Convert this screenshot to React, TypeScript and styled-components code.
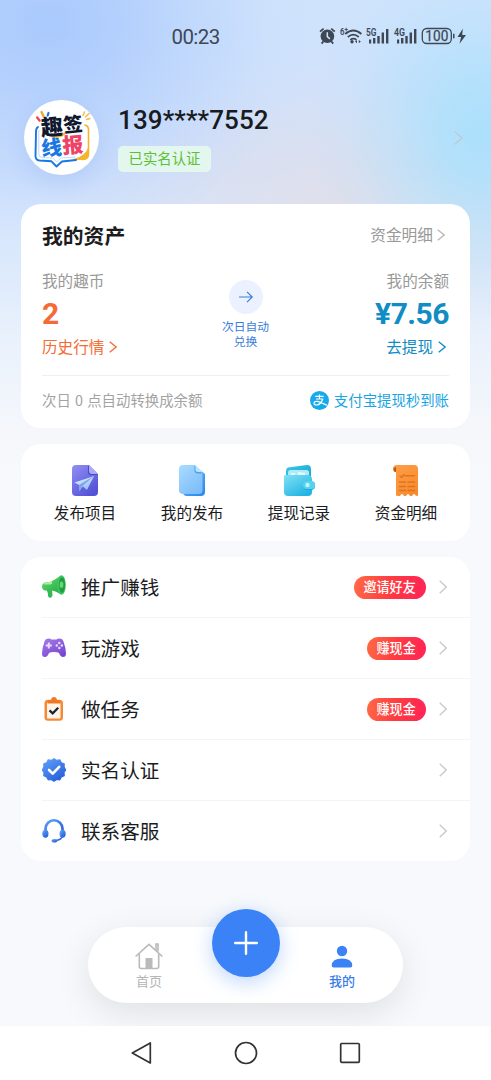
import React from "react";
import styled, { createGlobalStyle } from "styled-components";

const cjk = `"Noto Sans CJK SC", "Noto Sans", sans-serif`;
const num = `Roboto, "Noto Sans", "Noto Sans CJK SC", sans-serif`;

const GlobalStyle = createGlobalStyle`
  *, *::before, *::after { box-sizing: border-box; }
  body { margin: 0; font-family: ${cjk}; color: #1b1c1e; background: #f7f9fc; }
  svg { display: block; flex: none; }
`;

const Screen = styled.div`
  display: flex;
  flex-direction: column;
  width: 491px;
  height: 1080px;
  overflow: hidden;
  background:
    radial-gradient(ellipse 170px 190px at 482px 132px, rgba(168, 224, 252, 0.92) 0%, rgba(168, 224, 252, 0.72) 25%, rgba(168, 224, 252, 0.38) 52%, rgba(168, 224, 252, 0.12) 78%, rgba(168, 224, 252, 0) 100%),
    radial-gradient(ellipse 260px 220px at 48px 22px, rgba(168, 200, 253, 0.95) 0%, rgba(168, 200, 253, 0.72) 28%, rgba(168, 200, 253, 0.38) 55%, rgba(168, 200, 253, 0.1) 82%, rgba(168, 200, 253, 0) 100%),
    radial-gradient(ellipse 290px 150px at 340px 200px, rgba(224, 223, 234, 0.95) 0%, rgba(224, 223, 234, 0.6) 38%, rgba(224, 223, 234, 0.18) 74%, rgba(224, 223, 234, 0) 100%),
    linear-gradient(180deg, #d0e3fc 0, #cfe1fd 170px, #dbe9fc 260px, #ebf2fc 350px, #f5f7fb 430px, #f7f9fc 480px);
`;

const StatusBar = styled.header`
  display: flex;
  align-items: center;
  justify-content: space-between;
  height: 72px;
  padding: 0 23px 0 171.5px;
`;

const Clock = styled.time`
  font: 400 20.5px/24px ${num};
  letter-spacing: -0.6px;
  color: #3e4754;
  padding-top: 2px;
`;

const Profile = styled.section`
  display: flex;
  align-items: center;
  height: 76px;
  margin: 27.5px 28px 0 24px;
`;

const Avatar = styled.div`
  width: 75px;
  height: 75px;
  border-radius: 50%;
  background: #fff;
  box-shadow: 0 8px 20px rgba(80, 130, 220, 0.14);
`;

const Identity = styled.div`
  display: flex;
  flex-direction: column;
  align-items: flex-start;
  flex: 1;
  gap: 10px;
  margin-left: 19px;
`;

const Phone = styled.h1`
  margin: 0;
  font: 500 26px/32px ${num};
  letter-spacing: 0.1px;
  color: #191b20;
`;

const Verified = styled.span`
  height: 26px;
  padding: 0 10.5px;
  border-radius: 5px;
  background: #e4f7ee;
  color: #5cc034;
  font-size: 14.4px;
  line-height: 24px;
`;

const Card = styled.section<{ $pad?: string; $gap?: string }>`
  margin: ${(p) => p.$gap ?? "16px"} 21px 0;
  padding: ${(p) => p.$pad ?? "0"};
  border-radius: 20px;
  background: #fff;
`;

const Between = styled.div`
  display: flex;
  justify-content: space-between;
`;

const CardTitle = styled.h2`
  margin: 0;
  font-size: 20.8px;
  line-height: 24px;
  font-weight: 700;
`;

const MoreLink = styled.a`
  display: flex;
  align-items: center;
  gap: 4px;
  padding-right: 4px;
  font-size: 15.7px;
  line-height: 24px;
  color: #999;
`;

const Balances = styled(Between)`
  height: 110px;
  padding-top: 23px;
`;

const Balance = styled.div<{ $tone: string; $end?: boolean }>`
  display: flex;
  flex-direction: column;
  align-items: ${(p) => (p.$end ? "flex-end" : "flex-start")};
  width: 120px;
  color: ${(p) => p.$tone};
`;

const Label = styled.span`
  font-size: 15.6px;
  line-height: 20px;
  color: #999;
`;

const Amount = styled.strong`
  font: 700 30px/36px ${num};
  letter-spacing: -0.5px;
  margin: 6px 0 4px;
`;

const ActionLink = styled.a<{ $inset?: boolean }>`
  display: flex;
  align-items: center;
  gap: 5px;
  padding-right: ${(p) => (p.$inset ? "3px" : "0")};
  font-size: 15.6px;
  line-height: 20px;
  svg { margin-top: 2px; }
`;

const Exchange = styled.div`
  display: flex;
  flex-direction: column;
  align-items: center;
  padding-top: 10px;
  width: 60px;
  font-size: 11.8px;
  line-height: 15px;
  text-align: center;
  color: #3b7ddb;
`;

const ArrowDisc = styled.span`
  display: flex;
  align-items: center;
  justify-content: center;
  width: 34px;
  height: 34px;
  margin-bottom: 4px;
  border-radius: 50%;
  background: #ebf1fe;
`;

const CardFoot = styled(Between)`
  margin-top: 18px;
  padding-top: 14px;
  border-top: 1px solid #efeff1;
  font-size: 14.4px;
  line-height: 20px;
  color: #a3a3a3;
`;

const FootNote = styled.span`
  word-spacing: 1px;
`;

const PayNote = styled.span`
  display: flex;
  align-items: center;
  gap: 5px;
  color: #18a5e4;
`;

const Shortcuts = styled.nav`
  display: grid;
  grid-template-columns: repeat(4, 1fr);
`;

const Shortcut = styled.a`
  display: flex;
  flex-direction: column;
  align-items: center;
  gap: 4px;
  font-size: 15.6px;
  line-height: 22px;
`;

const Row = styled.a`
  display: flex;
  align-items: center;
  height: 61px;
  margin-left: 21px;
  padding-right: 23px;
  font-size: 19.6px;
  & + & { border-top: 1px solid #f3f4f6; }
  &:first-child { height: 60px; }
`;

const RowLabel = styled.span`
  flex: 1;
  margin-left: 15px;
  line-height: 28px;
`;

const Pill = styled.span`
  height: 23px;
  margin-right: 13.5px;
  padding: 0 9.7px;
  border-radius: 12px;
  background: linear-gradient(100deg, #ff6b45 0%, #ff3b41 50%, #ff2357 100%);
  color: #fff;
  font-size: 13.1px;
  font-weight: 500;
  line-height: 22.5px;
`;

const TabBar = styled.nav`
  display: flex;
  justify-content: space-between;
  width: 315px;
  height: 76px;
  margin: 66px auto 0 88px;
  padding: 0 46px;
  border-radius: 38px;
  background: #fff;
  box-shadow: 0 10px 36px rgba(0, 0, 0, 0.1);
`;

const Tab = styled.a<{ $active?: boolean }>`
  display: flex;
  flex-direction: column;
  align-items: center;
  gap: 1px;
  padding-top: 16px;
  width: 30px;
  font-size: 13px;
  line-height: 20px;
  font-weight: ${(p) => (p.$active ? 500 : 400)};
  color: ${(p) => (p.$active ? "#3a7de4" : "#b5b5b5")};
`;

const AddButton = styled.button`
  display: flex;
  align-items: center;
  justify-content: center;
  width: 68px;
  height: 68px;
  margin: -18px 0 0;
  padding: 0;
  border: 0;
  border-radius: 50%;
  background: #3b82f6;
  box-shadow: 0 5px 20px rgba(59, 130, 246, 0.33);
`;

const SystemNav = styled.footer`
  display: flex;
  align-items: center;
  justify-content: space-between;
  height: 54px;
  margin-top: auto;
  padding: 0 130px;
  background: #fff;
  position: relative;
`;

const Chevron = ({ w = 8, h = 14, color = "#c8c9cc" }: { w?: number; h?: number; color?: string }) => (
  <svg width={w} height={h} viewBox={`0 0 ${w} ${h}`} fill="none" stroke={color} strokeWidth="1.3">
    <path d={`M.7 .7 L${w - 0.8} ${h / 2} L.7 ${h - 0.7}`} />
  </svg>
);

const StatusIcons = () => (
  <svg width="150" height="24" viewBox="318 24 150 24" fill="#3e4754">
    <circle cx="327.4" cy="36.3" r="6.8" />
    <path d="M320 31.6l3.6-3M331.200 28.600l3.600 3M323.500 41.200l-1.900 2.400M331.300 41.200l1.900 2.400" stroke="#3e4754" strokeWidth="1.8" />
    <path d="M327.300 32.300v4.300l2.600 2.300" stroke="#cfe2fb" strokeWidth="1.500" fill="none" />
    <text x="340" y="35" fontSize="9" fontWeight="600" fontFamily="Roboto" textLength="4.500" lengthAdjust="spacingAndGlyphs">6</text>
    <path d="M346.200 27.800v3.400M344.600 29.500h3.200" stroke="#3e4754" strokeWidth=".9" />
    <g fill="none" stroke="#3e4754" strokeWidth="1.700">
      <path d="M345.200 34q8.200-7 16.200 0" />
      <path d="M347.800 37q5.600-4.600 11 0" />
      <path d="M350.300 39.800q3.200-2.500 6.200 0" />
    </g>
    <circle cx="352" cy="41.700" r="1.700" />
    <path d="M355 41.600l2-1.700v3.400zM360.800 41.600l-2-1.700v3.400z" />
    <text x="366" y="35.800" fontSize="10" fontWeight="600" fontFamily="Roboto" textLength="10.500" lengthAdjust="spacingAndGlyphs">5G</text>
    <text x="394" y="35.800" fontSize="10" fontWeight="600" fontFamily="Roboto" textLength="11" lengthAdjust="spacingAndGlyphs">4G</text>
    {[0, 28].map((dx) => (
      <g key={dx} transform={`translate(${dx} 0)`}>
        <rect x="369" y="39.500" width="2.200" height="4" />
        <rect x="373" y="38" width="2.400" height="5.500" />
        <rect x="377.300" y="36" width="2.400" height="7.500" />
        <rect x="381.600" y="32.500" width="2.400" height="11" />
        <rect x="386" y="29" width="2.400" height="14.500" />
      </g>
    ))}
    <rect x="422.300" y="28.500" width="29" height="15" rx="4.500" fill="none" stroke="#3e4754" strokeWidth="1.300" />
    <text x="425.300" y="41.100" fontSize="14.500" fontWeight="400" fontFamily="Roboto" stroke="#3e4754" strokeWidth=".25" textLength="23" lengthAdjust="spacingAndGlyphs">100</text>
    <rect x="453" y="33.800" width="1.500" height="4.500" />
    <path d="M462.800 28.700l-5.300 8.300h3.600l-1.600 6.800 6.500-8.800h-3.800z" />
  </svg>
);

const Logo = () => (
  <svg width="75" height="75" viewBox="0 0 75 75" fontFamily="Noto Sans CJK SC" fontWeight="900">
    <g fill="none" strokeLinecap="round" strokeLinejoin="round">
      <path d="M61 25q4 1 3.500 6v23q0 5-6 5.500" stroke="#f5b52b" strokeWidth="1.600" />
      <path d="M64.500 48v8q-1 3.500-6 3.500h-9q12-3 15-11.500z" fill="#f5b52b" stroke="#f5b52b" strokeWidth="1" />
      <path d="M14 27q-2 1-2 5l-.5 24q0 4 4 4.500l12 .8 5 5.200 5.500-5 14-1.500" stroke="#1877e0" strokeWidth="1.900" />
      <path d="M14.800 30v24q0 3 3 3.500l11 .5 4 4 4-4 14-1" stroke="#bfdcfb" strokeWidth="1" />
      <path d="M13.200 17.500l2.300 3" stroke="#ee4266" strokeWidth="2.400" />
      <path d="M17.500 12l2.400 5" stroke="#f3a92c" strokeWidth="2.400" />
      <path d="M24.500 13l-.8 2.500" stroke="#1877e0" strokeWidth="2.200" />
      <path d="M59 15.500l1.500-3.500M61.500 17l3.500-3.500M62.500 19.500l3.500-1" stroke="#f3b94a" strokeWidth="1.400" />
      <path d="M26 35q9 4 15-2" stroke="#f3b52b" strokeWidth="2" />
    </g>
    <g fill="#101830">
      <text transform="translate(17.500 36) rotate(-5)" fontSize="22">趣</text>
      <text transform="translate(40 32.500) rotate(-6)" fontSize="19.500">签</text>
    </g>
    <text transform="translate(18 56) rotate(-5)" fontSize="20.500" fill="#1877e0">线</text>
    <text transform="translate(39 53.500) rotate(-5)" fontSize="21" fill="#ee4266">报</text>
  </svg>
);

const Gradients = () => (
  <svg width="0" height="0">
    <defs>
      {[
        ["gPurple", "#9290f5", "#5351d6"],
        ["gSky", "#a9dcff", "#7ebdf9"],
        ["gSkyBack", "#6cb7f5", "#2d8df0"],
        ["gCyan", "#7fe2f6", "#22b4e2"],
        ["gCyanBack", "#38c7ea", "#139fcd"],
        ["gOrange", "#ff9f49", "#f98a2c"],
        ["gGreen", "#6edb6d", "#27ae4c"],
        ["gViolet", "#a77ce9", "#7847cf"],
        ["gBlue", "#5fa2fa", "#2860db"],
        ["gPlane", "#e4f3ff", "#94bcf8"],
      ].map(([id, a, b]) => (
        <linearGradient key={id} id={id} x1="0" y1="0" x2=".7" y2="1">
          <stop stopColor={a} />
          <stop offset="1" stopColor={b} />
        </linearGradient>
      ))}
    </defs>
  </svg>
);

const PublishIcon = () => (
  <svg width="32" height="33" viewBox="0 0 32 33">
    <path d="M7 1h13l9 9v18q0 4-4 4H7q-4 0-4-4V5q0-4 4-4z" fill="url(#gPurple)" />
    <path d="M19 1.500l10 9.500h-7q-3 0-3-3z" fill="#4d49c6" />
    <path d="M20 1l9 9h-6q-3 0-3-3z" fill="#aaa9fa" />
    <path d="M7 20l17-7-5.500 14-3.500-4.500-3 5.500v-7z" fill="#4744bb" opacity=".5" />
    <path d="M5.500 18.500L25 12l-7 14-4-3.500-3.500 4.500-.5-6z" fill="url(#gPlane)" />
    <path d="M25 12L10 21l.5 6 3-5z" fill="#7ca5ee" />
  </svg>
);

const PostsIcon = () => (
  <svg width="32" height="33" viewBox="0 0 32 33">
    <path d="M11 4h11l7 6v18q0 4-4 4H11q-4 0-4-4V8q0-4 4-4z" fill="url(#gSkyBack)" />
    <path d="M7 1h12l7.500 7.500V26q0 4-4 4H7q-4 0-4-4V5q0-4 4-4z" fill="url(#gSky)" />
    <path d="M18.500 1.500l8 8h-5q-3 0-3-3z" fill="#4ea1ef" />
    <path d="M19.500 1l7 7H22q-2.500 0-2.500-2.500z" fill="#bce4ff" />
  </svg>
);

const WalletIcon = () => (
  <svg width="34" height="33" viewBox="0 0 34 33">
    <path d="M6 3.500L25 1q4 0 4 4v20H4V7q0-3 2-3.500z" fill="url(#gCyanBack)" />
    <rect x="6" y="6" width="21" height="12" rx="2.500" fill="#b0eafa" />
    <path d="M9 9h4v3H9zM16 8l7 1v3h-7z" fill="#e5fbff" />
    <path d="M2 12q0-1.500 3-1h20q5 0 5 4v13q0 4-4 4H6q-4 0-4-4V12z" fill="url(#gCyan)" />
    <rect x="21" y="17.500" width="12" height="8.500" rx="4" fill="#1ba9d9" />
    <rect x="21" y="17" width="12" height="8" rx="3.500" fill="#56d2ef" />
    <circle cx="25.500" cy="21" r="2.200" fill="#c2f3fc" />
  </svg>
);

const BillIcon = () => (
  <svg width="32" height="33" viewBox="0 0 32 33">
    <path d="M6 1h18q4 0 4 4v26.500l-2 .5q-2-4-4 0h-2q-2-4-4 0h-2q-2-4-4 0H8l-2-.5V8q-3-.5-3-3.500T6 1z" fill="url(#gOrange)" />
    <path d="M4 7.500q-1.500-4 2-4.500v5z" fill="#b95716" />
    <path d="M10 12l1.800 1.500L14 10.500M15 11.800h9.500M9.500 18h6M18 18h6.500M9.500 22.500h6M18 22.500h6.500M9.500 26.500h6M18 26.500h6.500" fill="none" stroke="#dd7422" strokeWidth="1.400" strokeLinecap="round" />
  </svg>
);

const HornIcon = () => (
  <svg width="24" height="24" viewBox="0 0 24 24">
    <path d="M4.500 14h5.500l.500 6.500q-1 3-3.500 2Q5.500 22 6 19z" fill="#35b955" />
    <path d="M2.500 7.500q6 0 9.500-2.500 4-2.500 7-4.500v19q-5-3.500-9-4-4 .3-7 0-3-1-3-4t2.500-4z" fill="url(#gGreen)" />
    <path d="M2.500 7.500q4 .2 7.500-1.500v3q-5 1-9 0z" fill="#a9efa3" />
    <ellipse cx="19.500" cy="10" rx="4.300" ry="9.800" fill="#3fc45e" />
    <ellipse cx="20" cy="10" rx="3" ry="7.800" fill="#1f9c45" />
    <ellipse cx="19.500" cy="9.700" rx="1.800" ry="3.200" fill="#63d96e" />
  </svg>
);

const GameIcon = () => (
  <svg width="24" height="24" viewBox="0 0 24 24">
    <path d="M6.500 2.500q2 0 3 1h5q1-1 3-1 3 0 4 3Q24 12.500 24 17.500q0 3.500-3 3.500-2.500 0-4-4-1-1-5-1t-5 1q-1.500 4-4 4-3 0-3-3.500Q0 12.500 2.500 5.500q1-3 4-3z" fill="url(#gViolet)" />
    <path d="M6.800 6.500v6M3.800 9.500h6" stroke="#eadcff" strokeWidth="2" />
    <g fill="#eadcff"><circle cx="17.300" cy="7" r="1.200" /><circle cx="17.300" cy="12" r="1.200" /><circle cx="14.800" cy="9.500" r="1.200" /><circle cx="19.800" cy="9.500" r="1.200" /></g>
  </svg>
);

const TaskIcon = () => (
  <svg width="24" height="24" viewBox="0 0 24 24">
    <rect x="2.500" y="2.800" width="18.500" height="21" rx="3.500" fill="#f58a36" />
    <rect x="5" y="6" width="13.500" height="15.500" rx="1" fill="#fff4ea" />
    <path d="M7 3h2q.5-3 3-3t3 3h2q1 0 1 1.500v2H6v-2Q6 3 7 3z" fill="#ed7825" />
    <path d="M7.500 13.300l3.200 3 5.500-5.500" fill="none" stroke="#1c2430" strokeWidth="2.300" />
  </svg>
);

const BadgeIcon = () => (
  <svg width="24" height="24" viewBox="0 0 24 24">
    <path d="M12 .8l2.700 1.600 3.100-.5 1.500 2.800 2.900 1.200-.1 3.200 1.600 2.700-1.700 2.700.2 3.200-2.900 1.300-1.500 2.800-3.200-.3L12 23.200l-2.700-1.700-3.100.3-1.600-2.800-2.800-1.300.2-3.200L.3 11.800l1.600-2.700-.1-3.200 2.900-1.200 1.500-2.800 3.100.5z" fill="url(#gBlue)" stroke="url(#gBlue)" strokeWidth="1.200" strokeLinejoin="round" />
    <path d="M7 12l3.700 3.600 6.500-6.800" fill="none" stroke="#fff" strokeWidth="2.600" strokeLinecap="round" strokeLinejoin="round" />
  </svg>
);

const HeadsetIcon = () => (
  <svg width="24" height="24" viewBox="0 0 24 24" fill="none" stroke="url(#gBlue)">
    <path d="M3.500 13V9.800a8.500 8.500 0 0 1 17 0V13" strokeWidth="2.600" />
    <path d="M20.500 16q0 4.500-6.500 5.500" strokeWidth="1.500" />
    <rect x=".9" y="11.300" width="5" height="7" rx="2.300" fill="url(#gBlue)" />
    <rect x="18.100" y="11.300" width="5" height="7" rx="2.300" fill="url(#gBlue)" />
    <ellipse cx="12.500" cy="21.800" rx="2.900" ry="1.800" fill="url(#gBlue)" stroke="none" />
  </svg>
);

const AlipayIcon = () => (
  <svg width="19" height="19" viewBox="0 0 19 19">
    <circle cx="9.500" cy="9.500" r="9.500" fill="#17a9ec" />
    <path d="M5.300 5.400h8.400M9.500 3.400v4.500M6 8h6.700Q11.200 13.600 6.500 14 3.900 13.900 4 12q.4-1.800 2.900-1.600 2.200.2 10.100 3.900" fill="none" stroke="#fff" strokeWidth="1.200" />
  </svg>
);

const HomeIcon = () => (
  <svg width="28" height="27" viewBox="0 0 28 27" fill="none" stroke="#bababa" strokeWidth="1.600">
    <path d="M.6 13.500L14 1.300l13.400 12.200" />
    <path d="M4.300 11v12.500q0 2 2 2h15.400q2 0 2-2V11" />
    <path d="M21 7V1h2v7.500" />
    <path d="M10.500 15h7v10.500h-7z" fill="#bababa" stroke="none" />
  </svg>
);

const UserIcon = () => (
  <svg width="22" height="27" viewBox="0 0 22 27" fill="#3b82f6">
    <circle cx="11" cy="8" r="5.200" />
    <path d="M.7 22.700Q1 15.500 11 15.500t10.300 7.200q0 1.800-2 1.800H2.700q-2 0-2-1.800z" />
  </svg>
);

const shortcuts = [
  { icon: <PublishIcon />, label: "发布项目" },
  { icon: <PostsIcon />, label: "我的发布" },
  { icon: <WalletIcon />, label: "提现记录" },
  { icon: <BillIcon />, label: "资金明细" },
];

const rows = [
  { icon: <HornIcon />, label: "推广赚钱", pill: "邀请好友" },
  { icon: <GameIcon />, label: "玩游戏", pill: "赚现金" },
  { icon: <TaskIcon />, label: "做任务", pill: "赚现金" },
  { icon: <BadgeIcon />, label: "实名认证" },
  { icon: <HeadsetIcon />, label: "联系客服" },
];

export default function App() {
  return (
    <Screen>
      <GlobalStyle />
      <StatusBar>
        <Clock>00:23</Clock>
        <StatusIcons />
      </StatusBar>

      <Profile>
        <Avatar><Logo /></Avatar>
        <Identity>
          <Phone>139****7552</Phone>
          <Verified>已实名认证</Verified>
        </Identity>
        <Chevron w={9} color="#bccad6" />
      </Profile>

      <Card $pad="19px 21px 18px" $gap="28.5px">
        <Between>
          <CardTitle>我的资产</CardTitle>
          <MoreLink>资金明细<Chevron w={8} h={12} color="#b8b8b8" /></MoreLink>
        </Between>
        <Balances>
          <Balance $tone="#f56a35">
            <Label>我的趣币</Label>
            <Amount>2</Amount>
            <ActionLink>历史行情<Chevron h={12} color="#f56a35" /></ActionLink>
          </Balance>
          <Exchange>
            <ArrowDisc>
              <svg width="16" height="14" viewBox="0 0 16 14" fill="none" stroke="#3b7ddb" strokeWidth="1.200">
                <path d="M1 7h13M9 1.800L14.200 7 9 12.200" />
              </svg>
            </ArrowDisc>
            次日自动<br />兑换
          </Exchange>
          <Balance $tone="#118cc4" $end>
            <Label>我的余额</Label>
            <Amount>¥7.56</Amount>
            <ActionLink $inset>去提现<Chevron h={12} color="#118cc4" /></ActionLink>
          </Balance>
        </Balances>
        <CardFoot>
          <FootNote>次日 0 点自动转换成余额</FootNote>
          <PayNote><AlipayIcon />支付宝提现秒到账</PayNote>
        </CardFoot>
      </Card>

      <Card $pad="20px 10.5px 18px">
        <Shortcuts>
          {shortcuts.map((s) => (
            <Shortcut key={s.label}>{s.icon}{s.label}</Shortcut>
          ))}
        </Shortcuts>
      </Card>

      <Card>
        {rows.map((r) => (
          <Row key={r.label}>
            {r.icon}
            <RowLabel>{r.label}</RowLabel>
            {r.pill && <Pill>{r.pill}</Pill>}
            <Chevron w={8} />
          </Row>
        ))}
      </Card>

      <TabBar>
        <Tab><HomeIcon />首页</Tab>
        <AddButton aria-label="add">
          <svg width="24" height="24" viewBox="0 0 24 24" stroke="#fff" strokeWidth="2.400" strokeLinecap="round">
            <path d="M12 1.200v21.600M1.200 12h21.600" />
          </svg>
        </AddButton>
        <Tab $active><UserIcon />我的</Tab>
      </TabBar>

      <SystemNav>
        <svg width="22" height="24" viewBox="0 0 22 24" fill="none" stroke="#333" strokeWidth="1.700" strokeLinejoin="round">
          <path d="M20.300 2v20L2.300 12z" />
        </svg>
        <svg width="24" height="24" viewBox="0 0 24 24" fill="none" stroke="#333" strokeWidth="1.700">
          <circle cx="12" cy="12" r="10.500" />
        </svg>
        <svg width="22" height="24" viewBox="0 0 22 24" fill="none" stroke="#333" strokeWidth="1.700">
          <rect x="1.700" y="2.500" width="18.600" height="18.800" rx="1" />
        </svg>
      </SystemNav>
      <Gradients />
    </Screen>
  );
}
